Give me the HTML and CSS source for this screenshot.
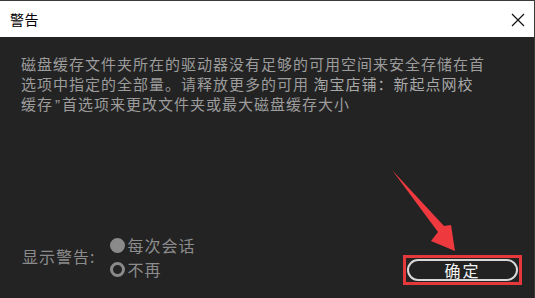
FILE: index.html
```html
<!DOCTYPE html>
<html lang="zh-CN">
<head>
<meta charset="utf-8">
<title>警告</title>
<link rel="stylesheet" href="styles.css">
</head>
<body>
<div class="window">
  <div class="titlebar">
    <span class="title">警告</span>
    <svg class="close" width="14" height="14" viewBox="0 0 14 14"><path d="M1 1 L13 13 M13 1 L1 13" stroke="#111" stroke-width="1.2" fill="none"/></svg>
  </div>
  <div class="content">
    <p class="message">磁盘缓存文件夹所在的驱动器没有足够的可用空间来安全存储在首<br>选项中指定的全部量。请释放更多的可用 <span class="mark">淘宝店铺：新起点网校</span><br>缓存<span class="quote">”</span>首选项来更改文件夹或最大磁盘缓存大小</p>
    <div class="footer">
      <span class="label">显示警告:</span>
      <div class="radios">
        <div class="radio-row"><span class="radio checked"></span><span>每次会话</span></div>
        <div class="radio-row"><span class="radio"></span><span>不再</span></div>
      </div>
      <div class="highlight"><button class="ok">确定</button></div>
    </div>
  </div>
  <svg class="arrow" width="535" height="298" viewBox="0 0 535 298"><polygon points="392,170 444,226 451,225 455,251 431,241 438,232" fill="#ee3a3f"/></svg>
</div>
</body>
</html>
```
FILE: styles.css
```css
html, body { margin: 0; padding: 0; }
body {
  width: 535px;
  height: 298px;
  background: #232323;
  font-family: "Noto Sans CJK SC", "Noto Sans", sans-serif;
  overflow: hidden;
}
.window {
  position: relative;
  width: 535px;
  height: 298px;
  box-sizing: border-box;
  border-top: 1px solid #3a3a3a;
  border-right: 1px solid #3a3a3a;
  display: flex;
  flex-direction: column;
  background: #232323;
}
.titlebar {
  height: 36px;
  background: #ffffff;
  display: flex;
  align-items: center;
  justify-content: space-between;
  padding: 0 9px 0 10px;
  flex-shrink: 0;
}
.title {
  font-size: 14px;
  color: #000;
  letter-spacing: 0.5px;
}
.close { display: block; margin-top: 1px; }
.content {
  flex: 1;
  display: flex;
  flex-direction: column;
  padding: 17px 12px 0 21px;
}
.message {
  margin: 0;
  font-size: 15px;
  line-height: 20px;
  letter-spacing: 1px;
  color: #9c9c9c;
}
.quote {
  font-family: "Liberation Sans", sans-serif;
  letter-spacing: 0;
  padding: 0 2px;
}
.mark { color: #a8a8a8; }
.footer {
  margin-top: auto;
  height: 48px;
  margin-bottom: 17px;
  display: flex;
  align-items: center;
  color: #8c8c8c;
  font-size: 16px;
  letter-spacing: 1px;
}
.label { margin-top: -3px; margin-left: 1px; }
.radios {
  margin-left: 15px;
  display: flex;
  flex-direction: column;
}
.radio-row {
  height: 24px;
  display: flex;
  align-items: center;
}
.radio {
  width: 15px;
  height: 15px;
  box-sizing: border-box;
  border-radius: 50%;
  border: 3px solid #8a8a8a;
  margin-right: 2px;
}
.radio.checked { background: #8a8a8a; border-color: #8a8a8a; }
.highlight {
  margin-left: auto;
  align-self: flex-end;
  margin-bottom: -4px;
  width: 119px;
  height: 30px;
  box-sizing: border-box;
  border: 3px solid #e5383d;
  padding: 1px 1px;
  display: flex;
}
.ok {
  flex: 1;
  border: 2px solid #d8d8d8;
  border-radius: 12px;
  background: #222;
  color: #f2f2f2;
  font-family: "Noto Sans CJK SC", sans-serif;
  font-size: 16px;
  letter-spacing: 2px;
  padding: 0;
  line-height: 18px;
}
.arrow {
  position: absolute;
  left: 0;
  top: -1px;
  pointer-events: none;
}
```
